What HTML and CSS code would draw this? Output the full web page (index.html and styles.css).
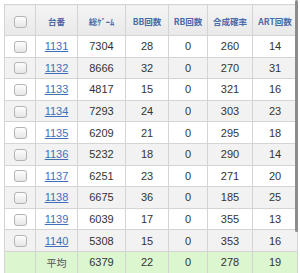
FILE: index.html
```html
<!DOCTYPE html>
<html lang="ja">
<head>
<meta charset="utf-8">
<link rel="stylesheet" href="styles.css">
</head>
<body>
<div class="page">
  <div class="toolbar">
    <span class="tbtn"></span>
    <span class="tbtn"></span>
  </div>
  <table class="data">
    <colgroup>
      <col class="c-chk"><col class="c-no"><col class="c-game"><col class="c-bb"><col class="c-rb"><col class="c-rate"><col class="c-art">
    </colgroup>
    <thead>
      <tr>
        <th><span class="chk"></span></th>
        <th>台番</th>
        <th>総ｹﾞｰﾑ</th>
        <th>BB回数</th>
        <th>RB回数</th>
        <th>合成確率</th>
        <th>ART回数</th>
      </tr>
    </thead>
    <tbody>
      <tr><td><span class="chk"></span></td><td><a href="#">1131</a></td><td>7304</td><td>28</td><td>0</td><td>260</td><td>14</td></tr>
      <tr><td><span class="chk"></span></td><td><a href="#">1132</a></td><td>8666</td><td>32</td><td>0</td><td>270</td><td>31</td></tr>
      <tr><td><span class="chk"></span></td><td><a href="#">1133</a></td><td>4817</td><td>15</td><td>0</td><td>321</td><td>16</td></tr>
      <tr><td><span class="chk"></span></td><td><a href="#">1134</a></td><td>7293</td><td>24</td><td>0</td><td>303</td><td>23</td></tr>
      <tr><td><span class="chk"></span></td><td><a href="#">1135</a></td><td>6209</td><td>21</td><td>0</td><td>295</td><td>18</td></tr>
      <tr><td><span class="chk"></span></td><td><a href="#">1136</a></td><td>5232</td><td>18</td><td>0</td><td>290</td><td>14</td></tr>
      <tr><td><span class="chk"></span></td><td><a href="#">1137</a></td><td>6251</td><td>23</td><td>0</td><td>271</td><td>20</td></tr>
      <tr><td><span class="chk"></span></td><td><a href="#">1138</a></td><td>6675</td><td>36</td><td>0</td><td>185</td><td>25</td></tr>
      <tr><td><span class="chk"></span></td><td><a href="#">1139</a></td><td>6039</td><td>17</td><td>0</td><td>355</td><td>13</td></tr>
      <tr><td><span class="chk"></span></td><td><a href="#">1140</a></td><td>5308</td><td>15</td><td>0</td><td>353</td><td>16</td></tr>
      <tr class="avg"><td></td><td>平均</td><td>6379</td><td>22</td><td>0</td><td>278</td><td>19</td></tr>
    </tbody>
  </table>
  <div class="scrollbar"></div>
</div>
</body>
</html>
```

FILE: styles.css
```css
* { box-sizing: border-box; }
html, body { margin: 0; padding: 0; background: #fff; }
body {
  font-family: "Liberation Sans", Arial, "Noto Sans CJK JP", sans-serif;
  color: #333;
}
.page {
  position: relative;
  width: 300px;
  height: 273px;
  padding-left: 4px;
  overflow: hidden;
}
.toolbar {
  height: 4px;
  display: flex;
  justify-content: flex-end;
  gap: 4px;
  padding-right: 9px;
}
.tbtn {
  display: block;
  width: 37px;
  height: 3px;
  margin-top: -3px;
  border: 1px solid #b8c4d6;
  border-top: none;
  background: #f3f5f9;
}
.data {
  border-collapse: collapse;
  table-layout: fixed;
  width: 293px;
  font-size: 11px;
  border-left: 1px solid #bdbdbd;
}
.c-chk { width: 31px; }
.c-no { width: 42px; }
.c-game { width: 48px; }
.c-bb { width: 43px; }
.c-rb { width: 39px; }
.c-rate { width: 45px; }
.c-art { width: 45px; }
.data th, .data td {
  border: 1px solid #d4d4d4;
  text-align: center;
  vertical-align: middle;
  padding: 0;
}
.data thead tr { height: 31px; }
.data th {
  background: linear-gradient(#f4f4f4, #e9e9e9);
  color: #4a6aa8;
  font-size: 8.5px;
  font-weight: bold;
  font-family: "Noto Sans CJK JP", "Liberation Sans", sans-serif;
  white-space: nowrap;
  padding-top: 2px;
}
.data tbody tr { height: 21.6px; }
.data tbody tr:nth-child(even) td { background: #f2f2f2; }
.data tbody tr:nth-child(odd) td { background: #fff; }
.data tbody tr.avg td { background: #dcf6d0; }
.avg td:nth-child(2) {
  font-family: "Noto Sans CJK JP", sans-serif;
  font-size: 10px;
  color: #555;
}
.data a {
  color: #3e6fb8;
  text-decoration: underline;
}
.chk {
  display: inline-block;
  width: 13px;
  height: 12px;
  border: 1px solid #b4b4b4;
  border-radius: 3px;
  background: linear-gradient(#fdfdfd, #e6e6e6);
  vertical-align: middle;
}
.scrollbar {
  position: absolute;
  left: 295px;
  top: 0;
  width: 3px;
  height: 232px;
  border-radius: 1.5px;
  background: #8c8c8c;
}
```
